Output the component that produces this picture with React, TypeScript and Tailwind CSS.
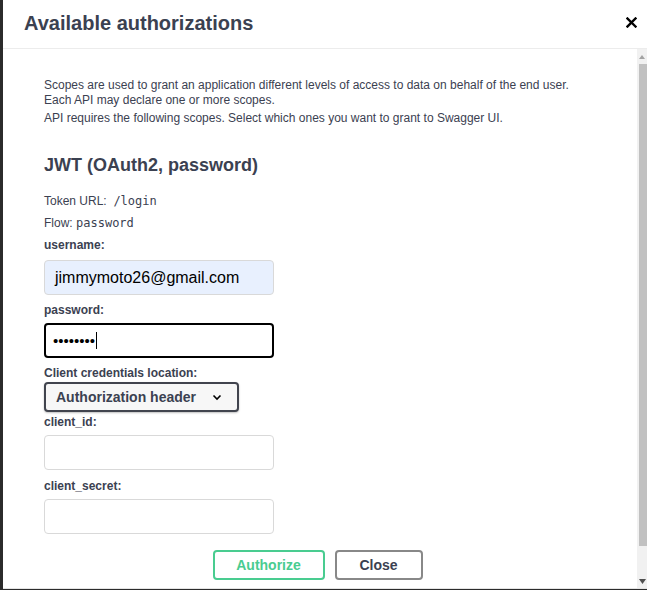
const sans = { fontFamily: '"Liberation Sans", Arial, sans-serif' };
const mono = { fontFamily: '"DejaVu Sans Mono", monospace' };

function Label({ text, mt }: { text: string; mt: string }) {
  return <div className={`${mt} h-[15px] text-[12px] leading-[15px] font-bold text-[#3b4151]`}>{text}</div>;
}

export default function App() {
  return (
    <div className="h-[590px] w-[647px] bg-[#2b2b2b] flex overflow-hidden" style={sans}>
      <div className="ml-[3px] flex-1 h-[589px] bg-white border-b border-[#e4e4e4] flex flex-col">
        {/* header */}
        <div className="h-[49px] shrink-0 border-b border-[#ececec] flex items-center justify-between pl-[21px] pr-[10px]">
          <h3 className="text-[20px] font-bold text-[#3b4151] leading-none -mt-[3px]">Available authorizations</h3>
          <svg width="11" height="11" viewBox="0 0 11 11" className="-mt-[4px]">
            <path d="M1.5 1.5 L9.5 9.5 M9.5 1.5 L1.5 9.5" stroke="#000" strokeWidth="2.4" strokeLinecap="square" />
          </svg>
        </div>

        <div className="flex flex-1 min-h-0">
          {/* content */}
          <div className="flex-1 pl-[41px] pt-[29px] flex flex-col text-[#3b4151]">
            <p className="text-[12px] leading-[15px]">
              Scopes are used to grant an application different levels of access to data on behalf of the end user.
              <br />
              Each API may declare one or more scopes.
            </p>
            <p className="mt-[3px] text-[12px] leading-[15px]">
              API requires the following scopes. Select which ones you want to grant to Swagger UI.
            </p>
            <h4 className="mt-[28px] h-[22px] text-[18px] leading-[22px] font-bold">JWT (OAuth2, password)</h4>
            <div className="mt-[18px] h-[15px] text-[12px] leading-[15px]">
              Token URL:&nbsp;{' '}
              <code className="text-[12px]" style={mono}>/login</code>
            </div>
            <div className="mt-[7px] h-[15px] text-[12px] leading-[15px]">
              Flow: <code className="text-[12px]" style={mono}>password</code>
            </div>

            <Label text="username:" mt="mt-[7px]" />
            <div className="mt-[7px] w-[230px] h-[35px] rounded-[4px] border border-[#d9d9d9] bg-[#e8f0fe] flex items-center px-[10px] text-[16px] text-black">
              jimmymoto26@gmail.com
            </div>

            <Label text="password:" mt="mt-[8px]" />
            <div className="mt-[5px] w-[230px] h-[35px] rounded-[4px] border-2 border-black bg-white flex items-center px-[7px] text-[15px] text-black">
              <span className="leading-none">••••••••</span>
              <span className="ml-px w-px h-[17px] bg-black" />
            </div>

            <Label text="Client credentials location:" mt="mt-[8px]" />
            <div className="mt-px w-[195px] h-[30px] rounded-[4px] border-2 border-[#41444e] bg-[#f7f7f7] shadow-[0_1px_2px_rgba(0,0,0,0.25)] flex items-center pl-[10px] text-[14px] font-bold text-[#3b4151]">
              <span>Authorization header</span>
              <svg width="10" height="7" viewBox="0 0 10 7" className="ml-[16px] mt-px">
                <path d="M1.5 1.5 L5 5 L8.5 1.5" fill="none" stroke="#000" strokeWidth="1.6" />
              </svg>
            </div>

            <Label text="client_id:" mt="mt-[3px]" />
            <div className="mt-[5px] w-[230px] h-[35px] rounded-[4px] border border-[#d9d9d9] bg-white" />

            <Label text="client_secret:" mt="mt-[9px]" />
            <div className="mt-[5px] w-[230px] h-[35px] rounded-[4px] border border-[#d9d9d9] bg-white" />

            <div className="mt-[16px] flex justify-center gap-[10px] pr-[46px]">
              <button className="w-[112px] h-[30px] rounded-[4px] border-2 border-[#49cc90] bg-white text-[14px] font-bold text-[#49cc90]">
                Authorize
              </button>
              <button className="w-[88px] h-[30px] rounded-[4px] border-2 border-[#888] bg-white text-[14px] font-bold text-[#3b4151]">
                Close
              </button>
            </div>
          </div>

          {/* scrollbar */}
          <div className="w-[10px] bg-[#f1f1f1] flex flex-col items-center">
            <svg width="6" height="4" viewBox="0 0 6 4" className="mt-[6px]">
              <path d="M0 4 L3 0 L6 4 Z" fill="#a3a3a3" />
            </svg>
            <div className="mt-[5px] ml-[2px] w-[8px] h-[482px] bg-[#c1c1c1]" />
            <div className="flex-1" />
            <svg width="7" height="5" viewBox="0 0 7 5" className="mb-[4px]">
              <path d="M0 0 L7 0 L3.5 5 Z" fill="#505050" />
            </svg>
          </div>
        </div>
      </div>
    </div>
  );
}
